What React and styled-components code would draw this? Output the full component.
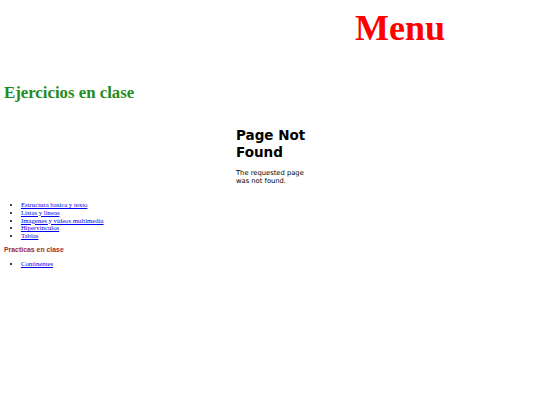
import React from 'react';
import styled, { createGlobalStyle } from 'styled-components';

const GlobalStyle = createGlobalStyle`
    html, body {
        margin: 0;
        padding: 0;
        background: #ffffff;
    }
    body {
        font-family: "Liberation Serif", "Times New Roman", serif;
    }
`;

const Page = styled.div`
    width: 540px;
    height: 405px;
    box-sizing: border-box;
    padding: 0 4px;
    overflow: hidden;
`;

const Header = styled.h1`
    margin: 7.6px 0 0;
    padding-left: 260px;
    text-align: center;
    font-size: 36px;
    line-height: 40px;
    font-weight: bold;
    color: #ff0000;
`;

const SectionTitle = styled.h2`
    margin: 35.4px 0 0;
    font-size: 16.8px;
    line-height: 19px;
    font-weight: bold;
    color: #228b22;
`;

const FrameBox = styled.div`
    margin-left: 228px;
    width: 84px;
    box-sizing: border-box;
    padding: 25.4px 4px 0;
    font-family: "DejaVu Sans", Verdana, sans-serif;
    color: #000000;
`;

const FrameTitle = styled.h1`
    margin: 0;
    font-size: 13.5px;
    line-height: 16.2px;
    font-weight: bold;
`;

const FrameText = styled.p`
    margin: 10.7px 0 0;
    font-size: 6.75px;
    line-height: 7.86px;
`;

const LinkList = styled.ul`
    margin: ${p => p.$top}px 0 0;
    padding-left: 16.9px;
    font-size: 6.75px;
    line-height: 7.76px;
    list-style: disc;
`;

const Item = styled.li`
    a {
        color: #0000ee;
        text-decoration: underline;
    }
`;

const SubTitle = styled.h4`
    margin: 6.4px 0 0;
    font-family: "Liberation Sans", Arial, sans-serif;
    font-size: 6.9px;
    line-height: 7.9px;
    font-weight: bold;
    color: #a52a2a;
`;

const ejercicios = [
    'Estructura basica y texto',
    'Listas y lineas',
    'Imagenes y videos multimedia',
    'Hipervinculos',
    'Tablas',
];

const practicas = ['Continentes'];

function App() {
    return (
        <Page>
            <GlobalStyle />
            <Header>Menu</Header>
            <SectionTitle>Ejercicios en clase</SectionTitle>

            <FrameBox>
                <FrameTitle>Page Not Found</FrameTitle>
                <FrameText>The requested page was not found.</FrameText>
            </FrameBox>

            <LinkList $top={14.9}>
                {ejercicios.map((name, index) =>
                    <Item key={index}><a href="#">{name}</a></Item>
                )}
            </LinkList>

            <SubTitle>Practicas en clase</SubTitle>
            <LinkList $top={6.1}>
                {practicas.map((name, index) =>
                    <Item key={index}><a href="#">{name}</a></Item>
                )}
            </LinkList>
        </Page>
    );
}

export default App;
